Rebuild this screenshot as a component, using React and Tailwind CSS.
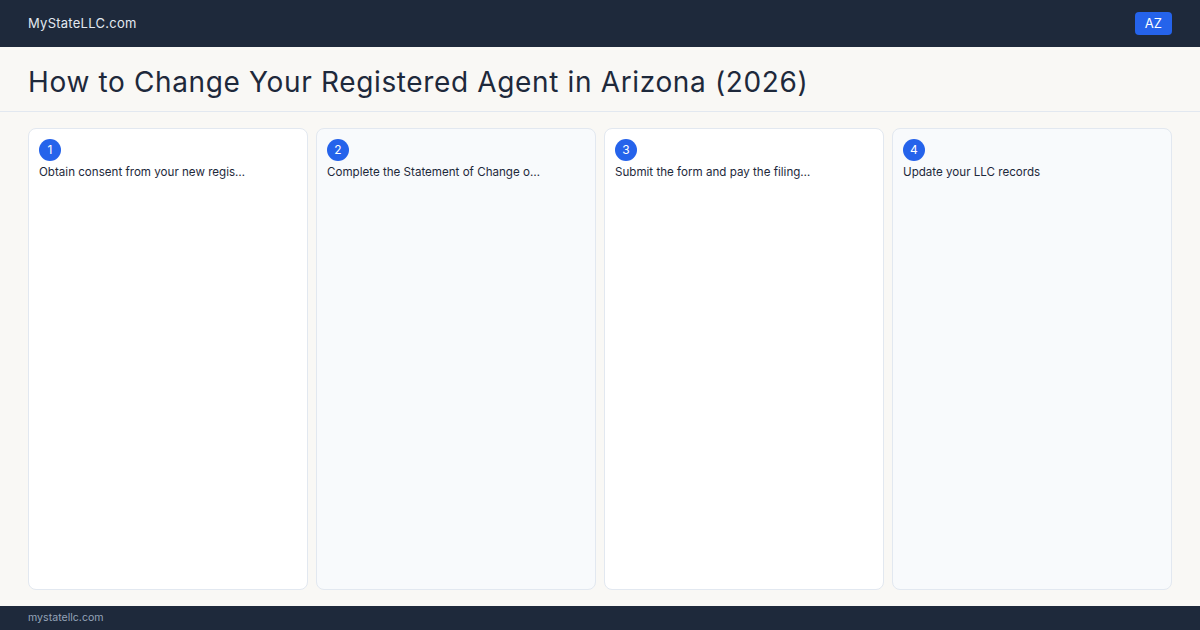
import React from 'react';

const steps = [
  'Obtain consent from your new registered agent',
  'Complete the Statement of Change of Registered Agent',
  'Submit the form and pay the filing fee',
  'Update your LLC records',
];

// keep step labels to one short line
const clip = (s, n = 34) => (s.length > n ? s.slice(0, n) + '…' : s);

const App = () => {
  return (
    <div
      className="w-[1200px] h-[630px] flex flex-col bg-[#f9f8f5] text-[#1e293b]"
      style={{ fontFamily: 'Inter, "Noto Sans", sans-serif' }}
    >
      <header className="h-[47px] shrink-0 bg-[#1e293b] flex items-center justify-between px-[28px]">
        <span className="text-[13px] tracking-[0.02em] text-[#e2e8f0]">MyStateLLC.com</span>
        <span className="h-[23px] px-[10px] rounded-[4px] bg-[#2563eb] text-white text-[13px] flex items-center">
          AZ
        </span>
      </header>

      <div className="h-[65px] shrink-0 flex items-center pt-[6px] px-[28px] border-b border-[#e2e8f0]">
        <h1 className="text-[28px] font-normal tracking-[0.023em] text-[#1e293b]">
          How to Change Your Registered Agent in Arizona (2026)
        </h1>
      </div>

      <main className="flex-1 min-h-0 grid grid-cols-4 gap-[8px] px-[28px] pt-[16px] pb-[16px]">
        {steps.map((step, i) => (
          <div
            key={i}
            className={`rounded-[8px] border border-[#e2e8f0] p-[10px] ${
              i % 2 === 0 ? 'bg-white' : 'bg-[#f8fafc]'
            }`}
          >
            <div className="w-[22px] h-[22px] rounded-full bg-[#2563eb] text-white text-[12px] flex items-center justify-center">
              {i + 1}
            </div>
            <p className="mt-[2px] text-[11.6px] leading-[18px] text-[#1e293b]">{clip(step)}</p>
          </div>
        ))}
      </main>

      <footer className="h-[24px] shrink-0 bg-[#1e293b] flex items-center px-[28px]">
        <span className="text-[10.6px] text-[#94a3b8]">mystatellc.com</span>
      </footer>
    </div>
  );
};

export default App;
